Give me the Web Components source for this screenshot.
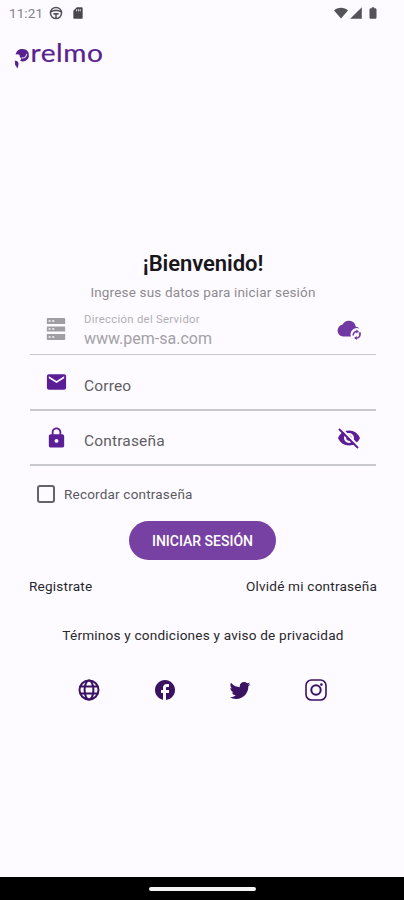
<!DOCTYPE html>
<html lang="es">
<head>
<meta charset="utf-8">
<meta name="viewport" content="width=device-width, initial-scale=1">
<title>Prelmo</title>
<style>
  html, body { margin: 0; height: 100%; }
  body {
    --bg: #fdfbff;
    --accent: #5b1e96;
    --button: #7741a3;
    --dark: #3b1262;
    --line: #c9c8cb;
    background: var(--bg);
    font-family: Roboto, "Liberation Sans", sans-serif;
    color: #222;
    overflow: hidden;
  }
</style>
</head>
<body>
<login-screen></login-screen>

<script>
const ICONS = {
  server: '<path fill-rule="evenodd" d="M3 0h18q1 0 1 1v5.500H2V1q0-1 1-1zM2 9.200h20v5.600H2zM2 17.500h20V23q0 1-1 1H3q-1 0-1-1zM4 2.400v1.800h2V2.400zm4 0v1.800h2V2.400zM4 11.100v1.800h2v-1.800zm4 0v1.800h2v-1.800zM4 19.800v1.800h2v-1.800zm4 0v1.800h2v-1.800z"/>',
  mail: '<path d="M20 4H4c-1.100 0-1.990.9-1.990 2L2 18c0 1.100.9 2 2 2h16c1.100 0 2-.9 2-2V6c0-1.100-.9-2-2-2zm0 4-8 5-8-5V6l8 5 8-5v2z"/>',
  lock: '<path d="M18 8h-1V6c0-2.760-2.240-5-5-5S7 3.240 7 6v2H6c-1.100 0-2 .9-2 2v10c0 1.100.9 2 2 2h12c1.100 0 2-.9 2-2V10c0-1.100-.9-2-2-2zm-6 9c-1.100 0-2-.9-2-2s.9-2 2-2 2 .9 2 2-.9 2-2 2zm3.100-9H8.900V6c0-1.710 1.390-3.100 3.100-3.100s3.100 1.390 3.100 3.100v2z"/>',
  eye: '<path fill-rule="evenodd" d="M12 4.500C7 4.500 2.700 7.600 1 12c1.700 4.400 6 7.500 11 7.500s9.300-3.100 11-7.500c-1.700-4.400-6-7.500-11-7.500zM12 17a5 5 0 1 1 0-10 5 5 0 0 1 0 10z"/><circle cx="12" cy="12" r="2.700"/><path d="M3.700 2 22 20.300" stroke="var(--bg)" stroke-width="2.400"/><path d="M2 3l19 19" stroke="currentColor" stroke-width="1.900"/>',
  cloud: '<path d="M18.800 9.700A7 7 0 0 0 5.600 7.600 6 6 0 0 0 6 19.500h8a6.200 6.200 0 0 1 8.500-7.800 5 5 0 0 0-3.700-2z"/><g fill="none" stroke="currentColor" stroke-width="1.500"><path d="M16.300 18.500a3.400 3.400 0 0 1 3.400-4M22.800 16.800a3.400 3.400 0 0 1-3.800 4.200"/></g><path d="m19.200 12.500 2.800 2-2.800 2zM19.800 23l-2.800-2 2.800-2zM21.200 15.500l2.700-.2-.4 3.300z"/>',
  globe: '<g fill="none" stroke="currentColor" stroke-width="2"><circle cx="12" cy="12" r="9.500"/><ellipse cx="12" cy="12" rx="4.400" ry="9.500"/><path d="M3 8.500h18M3 15.500h18"/></g>',
  facebook: '<path d="M22 12c0-5.520-4.480-10-10-10S2 6.480 2 12c0 4.840 3.440 8.870 8 9.800V15H8v-3h2V9.500C10 7.570 11.570 6 13.500 6H16v3h-2c-.55 0-1 .45-1 1v2h3v3h-3v6.950c5.050-.5 9-4.760 9-9.950z"/>',
  twitter: '<path d="M22.460 6c-.77.350-1.600.580-2.460.690.880-.530 1.560-1.370 1.880-2.380-.83.500-1.750.850-2.720 1.050C18.370 4.500 17.260 4 16 4c-2.350 0-4.270 1.920-4.270 4.290 0 .340.040.670.110.980C8.280 9.090 5.110 7.380 3 4.790c-.37.630-.58 1.370-.58 2.150 0 1.490.75 2.810 1.910 3.560-.71 0-1.370-.2-1.950-.5v.030c0 2.080 1.480 3.820 3.440 4.210a4.220 4.220 0 0 1-1.930.070 4.280 4.280 0 0 0 4 2.980 8.521 8.521 0 0 1-5.330 1.840c-.34 0-.68-.02-1.020-.06C3.440 20.290 5.700 21 8.120 21 16 21 20.330 14.460 20.330 8.790c0-.19 0-.37-.01-.56.840-.6 1.560-1.360 2.140-2.230z"/>',
  instagram: '<g fill="none" stroke="currentColor" stroke-width="1.600"><rect x="2" y="2" width="20" height="20" rx="5.500"/><circle cx="12" cy="12" r="4.700" stroke-width="2"/></g><circle cx="17.400" cy="6.600" r="1.300"/>',
  wheel: '<g fill="none" stroke="currentColor" stroke-width="2.600"><circle cx="12" cy="12" r="9.500"/><path d="M3 10q9-5 18 0M7.500 13.500h9M12 14v7"/></g>',
  card: '<path fill-rule="evenodd" d="M18 2h-8L4 8v12q0 2 2 2h12q2 0 2-2V4q0-2-2-2zM9 5.500h1.500V9H9zm3 0h1.500V9H12zm3 0h1.500V9H15z"/>',
  wifi: '<path d="M12 21.500 24 7.500C21 4.700 16.800 3 12 3S3 4.700 0 7.500z"/>',
  signal: '<path d="M2 22h20V2z"/>',
  battery: '<path d="M15.700 4H14V2h-4v2H8.300C7 4 6 5 6 6.300v13.400C6 21 7 22 8.300 22h7.400c1.300 0 2.300-1 2.300-2.300V6.300C18 5 17 4 15.700 4z"/>'
};

function define(name, html, setup) {
  const tpl = document.createElement('template');
  tpl.innerHTML = html;
  customElements.define(name, class extends HTMLElement {
    constructor() {
      super();
      this.attachShadow({ mode: 'open' });
      this.shadowRoot.appendChild(tpl.content.cloneNode(true));
    }
    connectedCallback() {
      if (setup) setup(this, this.shadowRoot);
    }
  });
}

define('ui-icon', `
  <style>
    :host { display: block; flex: none; width: 24px; height: 24px; }
    svg { display: block; width: 100%; height: 100%; fill: currentColor; overflow: visible; }
  </style>
  <svg viewBox="0 0 24 24" aria-hidden="true"></svg>
`, (el, root) => {
  root.querySelector('svg').innerHTML = ICONS[el.getAttribute('name')] || '';
});

define('status-bar', `
  <style>
    :host {
      display: flex;
      align-items: center;
      height: 25px;
      padding: 0 24px 0 9px;
      color: #55535a;
    }
    .time { font-size: 13.500px; color: #858289; width: 40px; letter-spacing: .1px; }
    ui-icon { width: 14px; height: 14px; }
    .card { margin-left: 8px; color: #49474d; }
    .right { display: flex; align-items: center; margin-left: auto; }
    .wifi { width: 14px; }
    .signal { margin-left: 1px; }
    .battery { margin-left: 3px; width: 14px; height: 14px; }
  </style>
  <span class="time">11:21</span>
  <ui-icon name="wheel"></ui-icon>
  <ui-icon class="card" name="card"></ui-icon>
  <div class="right">
    <ui-icon class="wifi" name="wifi"></ui-icon>
    <ui-icon class="signal" name="signal"></ui-icon>
    <ui-icon class="battery" name="battery"></ui-icon>
  </div>
`);

define('brand-logo', `
  <style>
    :host { display: block; height: 35px; margin: 13px 0 0 13px; color: #59218f; }
    svg { display: block; fill: currentColor; }
    text { font: 400 25px Lato, sans-serif; stroke: currentColor; stroke-width: .2px; stroke-linejoin: round; }
  </style>
  <svg width="92" height="35" viewBox="0 0 92 35">
    <path d="M2.600 16.500C3.500 12.500 6.500 10.800 9.500 11a6.200 6.200 0 1 1-2.300 11.800l1.200-2.300a4 4 0 0 1-1.900-3.600q-1.500-1.200-3.900-.4z"/>
    <path d="M8.600 19.800q4.300 1 5.200-4" fill="none" stroke="#d9c6e8" stroke-width="1.200"/>
    <path d="M1.800 22.800q4-.3 3.700 3.700-.3 3.200-1.400 4-.4-2.600-1.900-3.300z"/>
    <text x="17.500" y="24.400" textLength="73" lengthAdjust="spacingAndGlyphs" letter-spacing=".5">relmo</text>
  </svg>
`);

// Row with a leading icon, an optional small label and a trailing action
define('form-field', `
  <style>
    :host {
      display: flex;
      align-items: center;
      box-sizing: border-box;
      height: 55px;
      padding: 0 15px 0 15px;
      border-bottom: 2px solid var(--line);
      color: var(--accent);
    }
    .lead { width: 23px; margin-right: 16px; }
    .body { flex: 1; color: #5f5d63; font-size: 15.500px; line-height: 20px; letter-spacing: .16px; padding-top: 7px; }
    .label { display: none; font-size: 11.300px; line-height: 14px; letter-spacing: .3px; color: #b0aeb3; }
    .action { width: 24px; }
    :host([label]) .label { display: block; }
    :host([label]) .body { color: #a3a1a6; font-size: 16px; letter-spacing: 0; padding-top: 5px; }
    :host([label]) .label + div { margin-top: 2px; }
    :host([label]) .lead { color: #a09ea3; width: 22px; margin-right: 17px; }
    :host([label]) .action { color: #7038a3; }
    :host([label]) { border-bottom-width: 1px; }
  </style>
  <ui-icon class="lead"></ui-icon>
  <div class="body">
    <div class="label"></div>
    <div><slot></slot></div>
  </div>
`, (el, root) => {
  root.querySelector('.label').textContent = el.getAttribute('label') || '';
  root.querySelector('.lead').replaceWith(makeIcon('lead', el.getAttribute('icon')));
  if (el.hasAttribute('action')) {
    root.appendChild(makeIcon('action', el.getAttribute('action')));
  }
});

function makeIcon(cls, name) {
  const icon = document.createElement('ui-icon');
  icon.className = cls;
  icon.setAttribute('name', name);
  return icon;
}

define('check-option', `
  <style>
    :host { display: flex; align-items: center; height: 20px; color: #5b595f; font-size: 13.500px; letter-spacing: .2px; }
    .box { box-sizing: border-box; width: 18px; height: 18px; margin-right: 9px; border: 2px solid #656268; border-radius: 3px; }
  </style>
  <span class="box"></span><slot></slot>
`);

define('pill-button', `
  <style>
    :host { display: block; }
    button {
      display: block;
      width: 147px;
      height: 39px;
      margin: 0 auto;
      padding: 1px 0 0 1px;
      border: 0;
      border-radius: 20px;
      background: var(--button);
      color: #fff;
      font: 500 14px Roboto, sans-serif;
      letter-spacing: 0;
    }
  </style>
  <button type="button"><slot></slot></button>
`);

define('social-links', `
  <style>
    :host { display: flex; justify-content: space-between; padding: 0 76px 0 77px; color: var(--dark); }
    ui-icon { width: 24px; height: 24px; }
  </style>
  <ui-icon name="globe"></ui-icon>
  <ui-icon name="facebook"></ui-icon>
  <ui-icon name="twitter"></ui-icon>
  <ui-icon name="instagram"></ui-icon>
`);

define('nav-bar', `
  <style>
    :host { display: flex; justify-content: center; height: 23px; background: #000; }
    span { width: 107px; height: 4px; margin-top: 10px; border-radius: 2px; background: #f4f4f4; }
  </style>
  <span></span>
`);

define('login-screen', `
  <style>
    :host { display: flex; flex-direction: column; height: 900px; background: var(--bg); }
    h1 { margin: 177px 0 0; font-size: 22px; line-height: 28px; font-weight: 600; letter-spacing: -.05px; text-align: center; color: #18161b; padding-left: 2px; }
    .hint { margin: 4px 0 0; font-size: 13.500px; line-height: 20px; letter-spacing: .17px; text-align: center; color: #8d8b91; padding-left: 2px; }
    .fields { margin: 1px 28px 0 30px; }
    check-option { margin: 18px 0 0 37px; }
    pill-button { margin-top: 17px; }
    .links { display: flex; justify-content: space-between; margin: 16px 27px 0 29px; }
    .links, .terms { font-size: 13.600px; line-height: 20px; letter-spacing: .2px; color: #29272c; }
    .terms { margin-top: 29px; text-align: center; padding-left: 2px; }
    social-links { margin-top: 33px; }
    nav-bar { margin-top: auto; }
  </style>
  <status-bar></status-bar>
  <brand-logo></brand-logo>
  <h1>¡Bienvenido!</h1>
  <p class="hint">Ingrese sus datos para iniciar sesión</p>
  <div class="fields">
    <form-field icon="server" action="cloud" label="Dirección del Servidor" style="height:52px">www.pem-sa.com</form-field>
    <form-field icon="mail" style="height:56px">Correo</form-field>
    <form-field icon="lock" action="eye">Contraseña</form-field>
  </div>
  <check-option>Recordar contraseña</check-option>
  <pill-button>INICIAR SESIÓN</pill-button>
  <div class="links"><span>Registrate</span><span>Olvidé mi contraseña</span></div>
  <div class="terms">Términos y condiciones y aviso de privacidad</div>
  <social-links></social-links>
  <nav-bar></nav-bar>
`);
</script>
</body>
</html>
